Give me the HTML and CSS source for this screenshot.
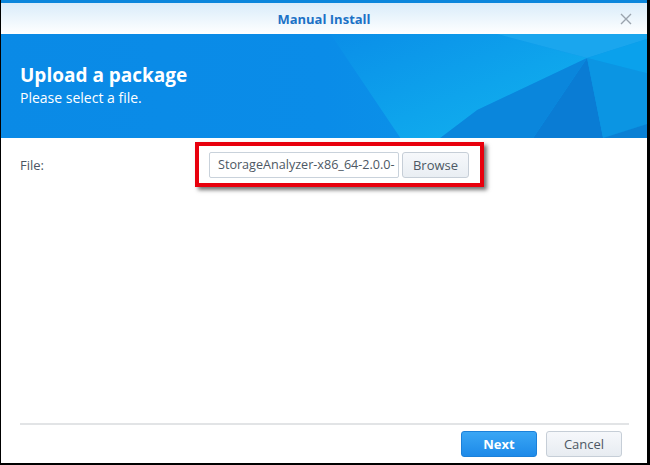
FILE: index.html
```html
<!DOCTYPE html>
<html lang="en">
<head>
    <meta charset="utf-8">
    <title>Manual Install</title>
    <link rel="stylesheet" href="styles.css">
</head>
<body>

    <div class="dialog">
        <div class="titlebar">
            <span></span>
            <span class="title">Manual Install</span>
            <span class="close">
                <svg width="12" height="12" viewBox="0 0 12 12">
                    <path d="M1 1 L11 11 M11 1 L1 11" stroke="#9aa3ad" stroke-width="1.4" fill="none"/>
                </svg>
            </span>
        </div>

        <div class="banner">
            <svg class="banner-bg" viewBox="0 0 647 104" preserveAspectRatio="none">
                <defs>
                    <linearGradient id="base" x1="0" y1="0" x2="1" y2="0">
                        <stop offset="0" stop-color="#0a8ae6"/>
                        <stop offset="0.5" stop-color="#0a8ce8"/>
                        <stop offset="1" stop-color="#0e9be9"/>
                    </linearGradient>
                    <linearGradient id="cyan" x1="0" y1="0" x2="1" y2="1">
                        <stop offset="0" stop-color="#0a8ee8"/>
                        <stop offset="0.55" stop-color="#0ea4ec"/>
                        <stop offset="1" stop-color="#13b3ef"/>
                    </linearGradient>
                </defs>
                <rect width="647" height="104" fill="url(#base)"/>
                <polygon points="330,0 497,0 587,24 477,76 440,104 400,104" fill="url(#cyan)"/>
                <polygon points="497,0 650,0 650,4 587,24" fill="#1aa6ee"/>
                <polygon points="587,24 650,4 650,40" fill="#0aa1ec"/>
                <polygon points="587,24 533,104 603,104" fill="#0a7cd4"/>
                <polygon points="477,76 587,24 533,104 440,104" fill="#0a86dc"/>
                <polygon points="587,24 650,40 650,89 603,104" fill="#0b95e3"/>
                <polygon points="650,89 603,104 650,104" fill="#0a80d4"/>
            </svg>
            <h1>Upload a package</h1>
            <p>Please select a file.</p>
        </div>

        <div class="content">
            <div class="form-row">
                <label class="field-label">File:</label>
                <div class="highlight">
                    <div class="file-input">StorageAnalyzer-x86_64-2.0.0-</div>
                    <button class="btn btn-browse">Browse</button>
                </div>
            </div>
        </div>

        <div class="footer">
            <button class="btn btn-next">Next</button>
            <button class="btn btn-cancel">Cancel</button>
        </div>
    </div>

</body>
</html>
```
FILE: styles.css
```css
body {
    margin: 0;
    background-color: #000;
    font-family: "Open Sans", "DejaVu Sans", sans-serif;
    color: #4a5560;
}

.dialog {
    margin: 0 3px 0 1px;
    height: 463px;
    background-color: #fff;
    display: flex;
    flex-direction: column;
}

.titlebar {
    height: 31px;
    border-top: 3px solid #0b86dc;
    background: linear-gradient(to bottom, #d9ecfa, #ffffff);
    display: grid;
    grid-template-columns: 1fr auto 1fr;
    align-items: center;
}

.title {
    color: #1c72c6;
    font-weight: bold;
    font-size: 13px;
}

.close {
    justify-self: end;
    margin-right: 15px;
    display: flex;
}

.banner {
    height: 104px;
    box-sizing: border-box;
    position: relative;
    padding: 28px 0 0 19px;
    color: #fff;
    overflow: hidden;
}

.banner-bg {
    position: absolute;
    left: 0;
    top: 0;
    width: 100%;
    height: 100%;
}

.banner h1 {
    position: relative;
    margin: 0;
    font-size: 19px;
    line-height: 26px;
    font-weight: bold;
}

.banner p {
    position: relative;
    margin: 0;
    font-size: 14px;
    line-height: 19px;
}

.content {
    flex: 1;
    padding: 4px 19px 0;
}

.form-row {
    display: flex;
    align-items: center;
}

.field-label {
    width: 175px;
    font-size: 13px;
    color: #4b5662;
}

.highlight {
    display: flex;
    gap: 3px;
    padding: 6px 11px 5px 10px;
    border: 4px solid #e8000d;
    box-shadow: 3px 3px 4px rgba(0, 0, 0, 0.55);
}

.file-input {
    width: 180px;
    height: 24px;
    line-height: 24px;
    padding: 0 0 0 8px;
    border: 1px solid #c9d2db;
    border-radius: 2px;
    font-size: 12.6px;
    color: #4d5864;
    white-space: nowrap;
    overflow: hidden;
}

.btn {
    height: 26px;
    font-family: "Open Sans", "DejaVu Sans", sans-serif;
    font-size: 13px;
    border-radius: 3px;
    cursor: pointer;
    padding: 0;
}

.btn-browse {
    width: 67px;
    border: 1px solid #c6ced7;
    background: linear-gradient(to bottom, #f6f8fb, #e9eef3);
    color: #4d5864;
}

.footer {
    margin: 0 18px 0 19px;
    padding: 6px 7px 6px 0;
    border-top: 2px solid #e2e4e6;
    display: flex;
    justify-content: flex-end;
    gap: 9px;
}

.btn-next {
    width: 76px;
    border: 1px solid #1b80d9;
    background: linear-gradient(to bottom, #3aa6f5, #1d8ae9);
    color: #fff;
    font-weight: bold;
}

.btn-cancel {
    width: 76px;
    border: 1px solid #c6ced7;
    background: linear-gradient(to bottom, #f6f8fb, #e7ecf1);
    color: #4d5864;
}
```
